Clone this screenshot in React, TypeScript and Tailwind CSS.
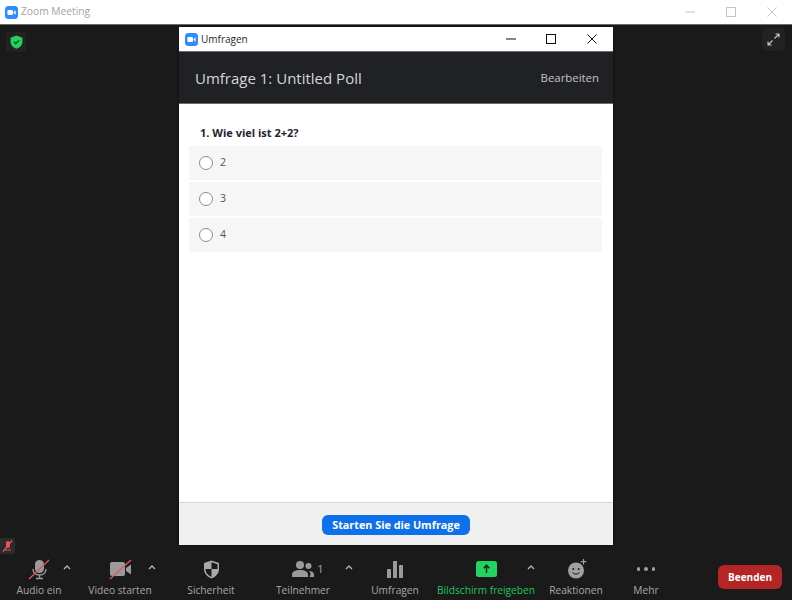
import React from "react";

function ZoomLogo() {
  return (
    <svg width="13" height="13" viewBox="0 0 13 13" className="shrink-0">
      <rect width="13" height="13" rx="3.5" fill="#2d8cff" />
      <rect x="2.4" y="4" width="5.6" height="5" rx="1.2" fill="#fff" />
      <path d="M8.6 5.9 10.6 4.3v4.4L8.6 7.1z" fill="#fff" />
    </svg>
  );
}

function Chevron({ className }: { className: string }) {
  return (
    <svg width="8" height="5" viewBox="0 0 8 5" className={"absolute " + className}>
      <path d="M1 4 4 1l3 3" fill="none" stroke="#b4b4b4" strokeWidth="1.3" />
    </svg>
  );
}

function ToolItem({
  label,
  width,
  green,
  children,
}: {
  label: string;
  width: string;
  green?: boolean;
  children: React.ReactNode;
}) {
  return (
    <div className={"relative flex shrink-0 flex-col items-center " + width}>
      <div className="flex h-[26px] items-center justify-center">{children}</div>
      <span
        className={
          "mt-[1px] whitespace-nowrap text-[10.2px] font-medium leading-[14px] " +
          (green ? "text-[#22c55e]" : "text-[#a8a8a8]")
        }
      >
        {label}
      </span>
    </div>
  );
}

export default function App() {
  return (
    <div
      className="flex h-[600px] w-[792px] flex-col overflow-hidden bg-[#1a1a1a]"
      style={{ fontFamily: '"Open Sans", "Liberation Sans", sans-serif' }}
    >
      {/* main window title bar */}
      <div className="flex h-[25px] shrink-0 items-center border-b border-[#6b6b6b] bg-white pl-[5px]">
        <ZoomLogo />
        <span className="ml-[3px] text-[10.25px] text-[#a3a3a3]">Zoom Meeting</span>
        <div className="ml-auto flex items-center">
          <svg width="10" height="10" viewBox="0 0 10 10" className="mr-[31px]">
            <path d="M0 5h10" stroke="#c4c4c4" />
          </svg>
          <svg width="10" height="10" viewBox="0 0 10 10" className="mr-[31px]">
            <rect x=".5" y=".5" width="9" height="9" fill="none" stroke="#c4c4c4" />
          </svg>
          <svg width="10" height="10" viewBox="0 0 10 10" className="mr-[15px]">
            <path d="M.5.5l9 9M9.5.5l-9 9" stroke="#c4c4c4" />
          </svg>
        </div>
      </div>

      <div className="relative flex-1">
        {/* encryption badge */}
        <div className="absolute left-[6px] top-[7px] flex h-[20px] w-[20px] items-center justify-center rounded-[4px] bg-[#222]">
          <svg width="13" height="14" viewBox="0 0 12 13">
            <path d="M6 .5 11.500 2.500V6.500C11.500 9.500 9 11.800 6 12.800 3 11.800.5 9.500.5 6.500V2.500z" fill="#1fd35a" />
            <path d="M3.700 6.400 5.300 8l3-3" fill="none" stroke="#10301c" strokeWidth="1.200" />
          </svg>
        </div>

        {/* fullscreen button */}
        <div className="absolute right-[7px] top-[3px] flex h-[23px] w-[23px] items-center justify-center rounded-[5px] bg-[#222]">
          <svg width="13" height="13" viewBox="0 0 13 13" fill="none" stroke="#c8c8c8" strokeWidth="1.100">
            <path d="M7.500 5.500 12 1M8.500 1H12v3.500M5.500 7.500 1 12M4.500 12H1V8.500" />
          </svg>
        </div>

        {/* muted indicator */}
        <div className="absolute bottom-[2px] left-0 flex h-[16px] w-[15px] items-center justify-center bg-[#2b2b2b]">
          <svg width="11" height="12" viewBox="0 0 11 12">
            <rect x="4" y="1" width="4" height="7" rx="2" fill="#e0565b" />
            <path d="M3 10h6M1 11.500 10 .5" stroke="#e0565b" strokeWidth="1.200" />
          </svg>
        </div>

        {/* polls dialog */}
        <div className="absolute left-[179px] top-[2px] flex h-[518px] w-[434px] flex-col bg-white shadow-[0_0_3px_rgba(0,0,0,0.6)]">
          <div className="flex h-[24px] shrink-0 items-center pl-[6px]">
            <ZoomLogo />
            <span className="ml-[3px] mt-[1px] text-[10px] text-[#1f1f1f]">Umfragen</span>
            <div className="ml-auto flex items-center">
              <svg width="10" height="10" viewBox="0 0 10 10" className="mr-[30px]">
                <path d="M0 5h10" stroke="#111" />
              </svg>
              <svg width="10" height="10" viewBox="0 0 10 10" className="mr-[31px]">
                <rect x=".5" y=".5" width="9" height="9" fill="none" stroke="#111" />
              </svg>
              <svg width="10" height="10" viewBox="0 0 10 10" className="mr-[16px]">
                <path d="M.5.5l9 9M9.5.5l-9 9" stroke="#111" />
              </svg>
            </div>
          </div>

          <div className="flex h-[53px] shrink-0 items-center justify-between border-y border-[#6b6b6b] bg-[#202124] pl-[16px] pr-[14px]">
            <span className="mt-[1px] text-[15px] text-[#d6d6d6]">Umfrage 1: Untitled Poll</span>
            <span className="mt-[1px] text-[11.400px] text-[#c4c4c4]">Bearbeiten</span>
          </div>

          <div className="flex-1 pl-[10px] pr-[11px]">
            <p className="ml-[11px] mt-[22px] text-[11px] font-bold leading-[14px] text-[#232333]">
              1. Wie viel ist 2+2?
            </p>
            <div className="mt-[6px] flex flex-col gap-[2px]">
              {["2", "3", "4"].map((n) => (
                <div key={n} className="flex h-[34px] items-center bg-[#f6f6f6] pl-[10px]">
                  <span className="h-[14px] w-[14px] rounded-full border border-[#8c8c8c] bg-white" />
                  <span className="ml-[7px] text-[10.500px] text-[#555]">{n}</span>
                </div>
              ))}
            </div>
          </div>

          <div className="flex h-[43px] shrink-0 items-center justify-center border-t border-[#d4d4d4] bg-[#f0f0f0] pt-[2px]">
            <button className="h-[20px] w-[148px] rounded-[6px] bg-[#0e71eb] text-[10.800px] font-bold text-white">
              Starten Sie die Umfrage
            </button>
          </div>
        </div>
      </div>

      {/* meeting toolbar */}
      <div className="flex h-[44px] shrink-0 items-start">
        <ToolItem label="Audio ein" width="w-[78px]">
          <svg width="24" height="24" viewBox="0 0 24 24">
            <rect x="8" y="3" width="9" height="13" rx="4.500" fill="#9a9a9a" />
            <path d="M6 12c0 4 3 6 6.500 6s6.500-2 6.500-6M12.500 18v3M9 21.500h7" fill="none" stroke="#9a9a9a" strokeWidth="1.400" />
            <path d="M2 22 22 3" stroke="#e0565b" strokeWidth="1.300" />
          </svg>
          <Chevron className="left-[63px] top-[9px]" />
        </ToolItem>

        <ToolItem label="Video starten" width="w-[84px]">
          <svg width="24" height="22" viewBox="0 0 24 22">
            <rect x="2" y="4" width="15" height="14" rx="2" fill="#9a9a9a" />
            <path d="M18 10l5-3.500v10L18 13z" fill="#9a9a9a" />
            <path d="M2 21 23 2" stroke="#e0565b" strokeWidth="1.300" />
          </svg>
          <Chevron className="left-[70px] top-[9px]" />
        </ToolItem>

        <ToolItem label="Sicherheit" width="w-[98px]">
          <svg width="17" height="19" viewBox="0 0 17 19">
            <path d="M8.500.5 16 3v6c0 4.500-3.200 7.800-7.500 9.500C4.200 16.800 1 13.500 1 9V3z" fill="#a8a8a8" />
            <path d="M8.500 2.300 14.500 4.200V9H8.500zM8.500 9V16.800C5 15.300 2.500 12.500 2.500 9z" fill="#1a1a1a" />
          </svg>
        </ToolItem>

        <ToolItem label="Teilnehmer" width="w-[86px]">
          <div className="ml-[10px] flex items-center gap-[3px]">
            <svg width="22" height="16" viewBox="0 0 22 16" fill="#9a9a9a">
              <circle cx="8" cy="4" r="4" />
              <path d="M0 16v-2.500C0 10.800 3 9 8 9s8 1.800 8 4.500V16z" />
              <circle cx="16.500" cy="5" r="3" />
              <path d="M17.500 16H22v-2c0-2.500-2-4-5-4 1 1 1.500 2 1.500 3.500z" />
            </svg>
            <span className="text-[11px] text-[#a8a8a8]">1</span>
          </div>
          <Chevron className="left-[85px] top-[9px]" />
        </ToolItem>

        <ToolItem label="Umfragen" width="w-[98px]">
          <svg width="16" height="17" viewBox="0 0 16 17" fill="#9a9a9a">
            <rect x="0" y="8" width="4" height="9" rx=".5" />
            <rect x="6" y="0" width="4" height="17" rx=".5" />
            <rect x="12" y="4" width="4" height="13" rx=".5" />
          </svg>
        </ToolItem>

        <ToolItem label="Bildschirm freigeben" width="w-[84px]" green>
          <svg width="21" height="16" viewBox="0 0 21 16">
            <rect width="21" height="16" rx="2.500" fill="#22d45f" />
            <path d="M10.500 12V5M7.800 7.200l2.700-3 2.700 3" fill="none" stroke="#0f2a18" strokeWidth="1.500" />
          </svg>
          <Chevron className="left-[83px] top-[9px]" />
        </ToolItem>

        <ToolItem label="Reaktionen" width="w-[96px]">
          <svg width="20" height="20" viewBox="0 0 20 20" className="ml-[2px]">
            <circle cx="9" cy="11.500" r="8" fill="#a0a0a0" />
            <circle cx="6.300" cy="10" r="1" fill="#1a1a1a" />
            <circle cx="11.700" cy="10" r="1" fill="#1a1a1a" />
            <path d="M5.500 13.500c1.500 2 5.500 2 7 0" fill="none" stroke="#1a1a1a" strokeWidth="1" />
            <path d="M16.500 0v5.500M13.800 2.700h5.500" stroke="#a0a0a0" strokeWidth="1.200" />
          </svg>
        </ToolItem>

        <ToolItem label="Mehr" width="w-[44px]">
          <div className="flex gap-[4px]">
            <span className="h-[3.500px] w-[3.500px] rounded-full bg-[#a0a0a0]" />
            <span className="h-[3.500px] w-[3.500px] rounded-full bg-[#a0a0a0]" />
            <span className="h-[3.500px] w-[3.500px] rounded-full bg-[#a0a0a0]" />
          </div>
        </ToolItem>

        <button className="ml-auto mr-[10px] mt-[9px] h-[24px] w-[64px] rounded-[6px] bg-[#b52525] pt-[1px] text-[10px] font-bold text-white">
          Beenden
        </button>
      </div>
    </div>
  );
}
